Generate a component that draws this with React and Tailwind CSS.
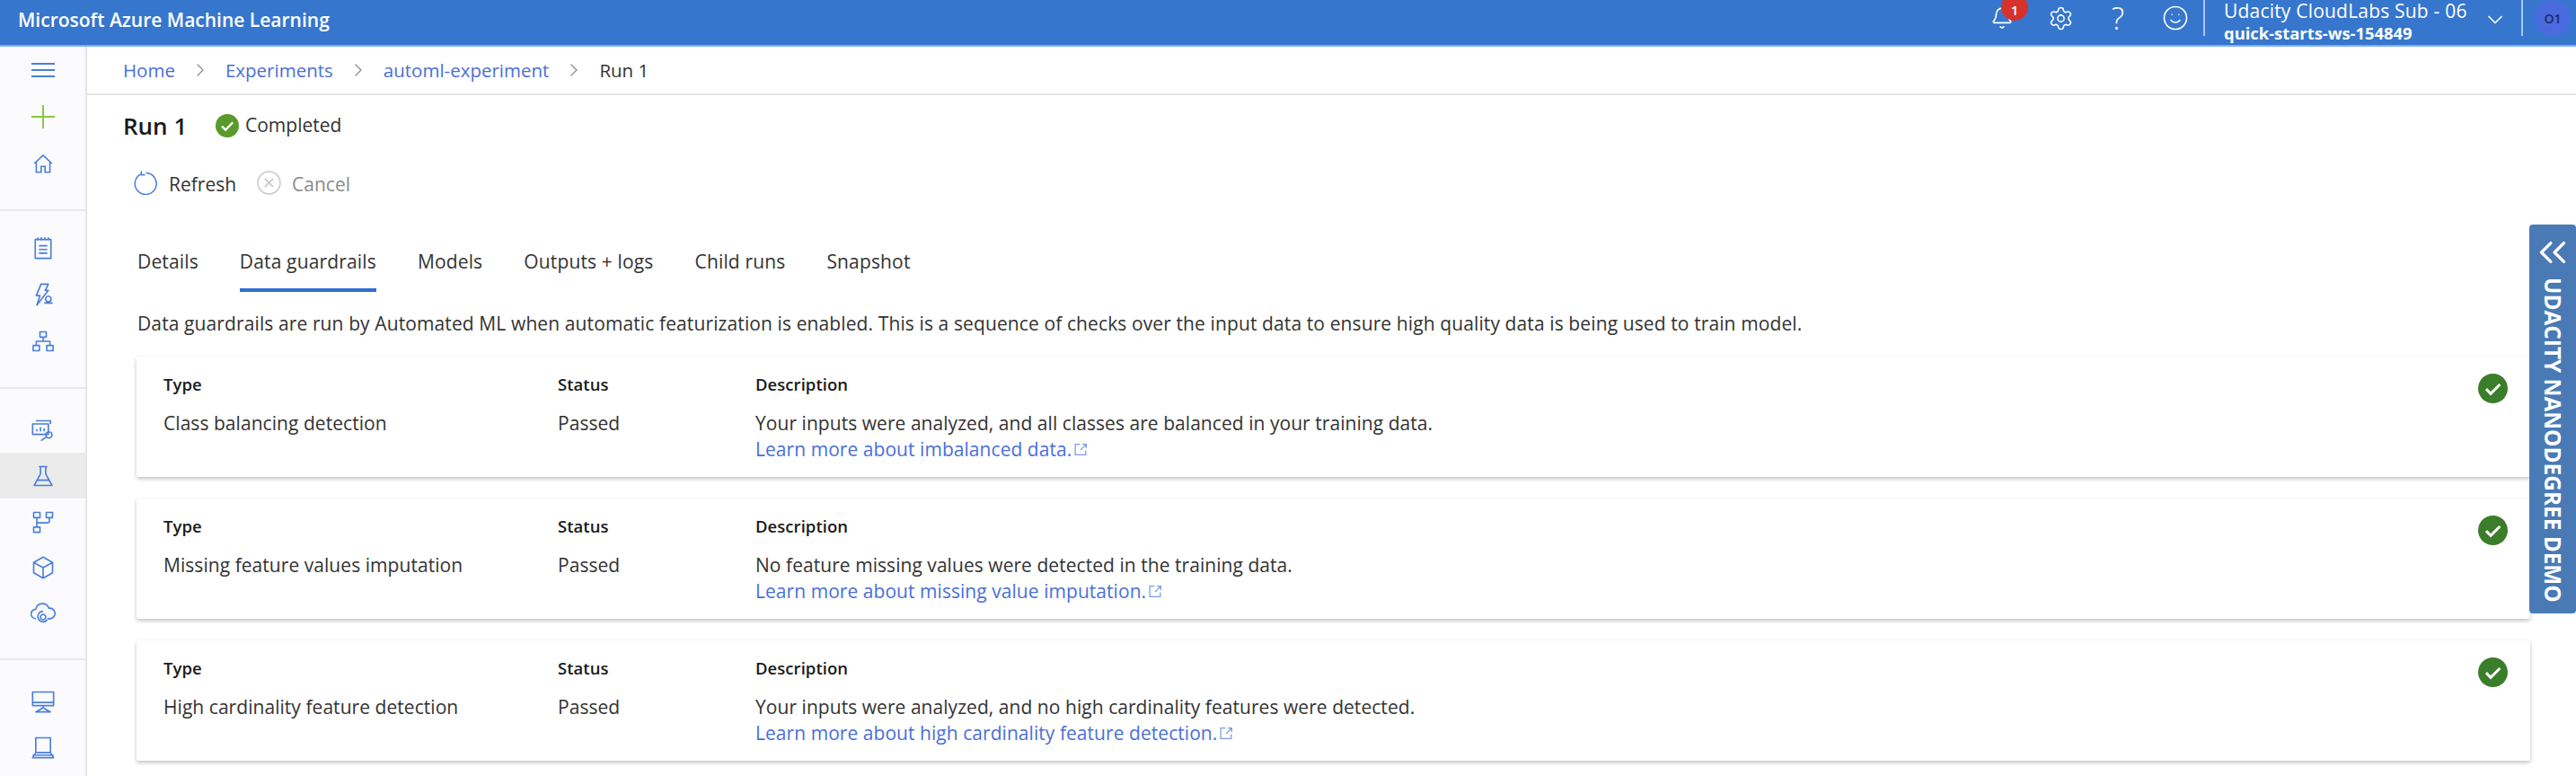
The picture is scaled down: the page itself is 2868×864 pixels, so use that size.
import { Bell, Settings, Smile, ChevronDown, ChevronRight, ChevronsLeft } from "lucide-react";

// Sidebar icons, drawn in the thin outline style of the portal
const SIDE_ICONS = {
  home: <path d="M3 12l9-8.5L21 12M5 10.5V21h5v-6h4v6h5V10.5" />,
  notes: <path d="M4.5 4h15v18h-15zM7 2v3M10.3 2v3M13.7 2v3M17 2v3M8 10h8M8 13.5h8M8 17h8" />,
  bolt: <path d="M10 2h7l-3 6h3l-11 14 3-9H5.5zM17 13.5a2.7 2.7 0 1 0 .01 0M13 20h8" />,
  tree: <path d="M9 3h6v5H9zM2.5 16h6v5h-6zM15.5 16h6v5h-6zM12 8v4M5.5 16v-4h13v4" />,
  search: <path d="M5 3h14v3M2 6h15v10H2zM6 13v-2M9.5 13V9M13 13v-3M17.5 13.5a3 3 0 1 0 .01 0M15 18.5L10 22" />,
  flask: <path d="M8 3h8M9.5 3v7L3.5 21h17L14.5 10V3M6.5 16h11" />,
  pipeline: <path d="M3 3h6v5H3zM15 3h6v5h-6zM3 17h6v5H3zM6 8v9M18 8v3a2 2 0 0 1-2 2H6" />,
  cube: <path d="M12 2l9 5v10l-9 5-9-5V7zM3 7l9 5 9-5M12 12v10" />,
  cloud: <path d="M5 17a4.5 4.5 0 0 1 0-9 6.5 6.5 0 0 1 12.5-1 5 5 0 0 1 1.5 10h-3M12 10a5 5 0 1 0 4 8M12 13a2.5 2.5 0 1 0 .01 0" />,
  monitor: <path d="M2 3h20v13H2zM12 16v2M5 22l7-4 7 4zM2 13h20" />,
  laptop: <path d="M5 3h14v14H5zM5 17l-3 5h20l-3-5M2 19.5h20" />,
};

function SideIcon({ name, size = 28, active, color = "#4a7fdc" }) {
  return (
    <div className={`h-[51px] flex items-center justify-center ${active ? "bg-[#ebebeb]" : ""}`}>
      <svg width={size} height={size} viewBox="0 0 24 24" fill="none" stroke={color} strokeWidth="1.4" strokeLinejoin="round">
        {SIDE_ICONS[name]}
      </svg>
    </div>
  );
}

function CheckCircle({ size, color }) {
  return (
    <svg width={size} height={size} viewBox="0 0 24 24" className="shrink-0">
      <circle cx="12" cy="12" r="12" fill={color} />
      <path d="M6.5 12.5l3.7 3.7 7.5-7.5" fill="none" stroke="#fff" strokeWidth="2.2" />
    </svg>
  );
}

function ExternalIcon() {
  return (
    <svg width="17" height="17" viewBox="0 0 16 16" fill="none" stroke="#7f9be6" strokeWidth="1.2" className="ml-[2px] inline-block">
      <path d="M7 2.5H2v11h11V9M9.5 2.5h4v4M13.5 2.5L7.5 8.5" />
    </svg>
  );
}

const crumbs = ["Home", "Experiments", "automl-experiment"];
const tabs = ["Details", "Data guardrails", "Models", "Outputs + logs", "Child runs", "Snapshot"];
const guardrails = [
  {
    type: "Class balancing detection",
    description: "Your inputs were analyzed, and all classes are balanced in your training data.",
    link: "Learn more about imbalanced data.",
  },
  {
    type: "Missing feature values imputation",
    description: "No feature missing values were detected in the training data.",
    link: "Learn more about missing value imputation.",
  },
  {
    type: "High cardinality feature detection",
    description: "Your inputs were analyzed, and no high cardinality features were detected.",
    link: "Learn more about high cardinality feature detection.",
  },
];

function GuardrailCard({ item }) {
  return (
    <div className="h-[134px] bg-white shadow-[0_2px_4px_rgba(0,0,0,0.25)] rounded-[2px] pl-[30px] pr-[25px] pt-[16px] flex text-[21px] tracking-[0.05px] text-[#333]">
      <div className="w-[439px]">
        <div className="h-[30px] leading-[30px] font-semibold text-[#1a1a1a] text-[18.5px]">Type</div>
        <div className="h-[30px] leading-[30px] mt-[13px]">{item.type}</div>
      </div>
      <div className="w-[220px]">
        <div className="h-[30px] leading-[30px] font-semibold text-[#1a1a1a] text-[18.5px]">Status</div>
        <div className="h-[30px] leading-[30px] mt-[13px]">Passed</div>
      </div>
      <div className="flex-1">
        <div className="h-[30px] leading-[30px] font-semibold text-[#1a1a1a] text-[18.5px]">Description</div>
        <div className="h-[30px] leading-[30px] mt-[13px]">{item.description}</div>
        <div className="h-[28px] leading-[28px] text-[#4a6fd8] flex items-center">
          {item.link}
          <ExternalIcon />
        </div>
      </div>
      <div className="pt-[3px]">
        <CheckCircle size={33} color="#3a7d2a" />
      </div>
    </div>
  );
}

export default function App() {
  return (
    <div className="relative w-full h-screen overflow-hidden bg-white flex flex-col font-['Open_Sans',sans-serif]">
      {/* top bar */}
      <header className="h-[52px] shrink-0 bg-[#3676cd] border-b-2 border-[#7fb0e8] flex items-start text-white">
        <div className="pl-[20px] h-[44px] leading-[44px] text-[21px] font-semibold">Microsoft Azure Machine Learning</div>
        <div className="ml-auto flex items-start h-[40px]">
          <div className="relative w-[66px] h-[40px] flex items-center justify-center">
            <Bell size={26} strokeWidth={1.5} />
            <span className="absolute left-[32px] top-[-7px] w-[30px] h-[30px] rounded-full bg-[#d6322c] flex items-center justify-center pt-[6px] text-[15px] leading-none font-semibold">1</span>
          </div>
          <div className="w-[64px] h-[40px] flex items-center justify-center">
            <Settings size={29} strokeWidth={1.3} />
          </div>
          <div className="w-[64px] h-[40px] flex items-center justify-center text-[34px] leading-none font-light">?</div>
          <div className="w-[64px] h-[40px] flex items-center justify-center">
            <Smile size={30} strokeWidth={1.3} />
          </div>
          <div className="w-[2px] h-[40px] bg-[#a9c6ec] ml-[-1px]" />
          <div className="ml-[21px] w-[288px] pt-[2px]">
            <div className="h-[20px] leading-[20px] text-[21px] tracking-[0.2px] whitespace-nowrap">Udacity CloudLabs Sub - 06</div>
            <div className="h-[28px] leading-[30px] text-[18.4px] font-bold whitespace-nowrap">quick-starts-ws-154849</div>
          </div>
          <div className="w-[28px] h-[44px] flex items-center justify-center">
            <ChevronDown size={30} strokeWidth={1.5} />
          </div>
          <div className="w-[2px] h-[40px] bg-[#a9c6ec] ml-[15px]" />
          <div className="ml-[13px] mr-[6px] w-[40px] h-[40px] rounded-full bg-[#4a6be0] text-[#1b2a5e] text-[14px] font-semibold flex items-center justify-center">O1</div>
        </div>
      </header>

      <div className="flex flex-1 min-h-0">
        {/* left nav */}
        <nav className="w-[97px] shrink-0 bg-[#fbfafd] border-r-2 border-[#e5e5e5]">
          <div className="pb-[25px] border-b-2 border-[#eaeaee]">
            <div className="h-[52px] flex items-center justify-center">
              <svg width="28" height="22" viewBox="0 0 28 22" stroke="#4a7fdc" strokeWidth="2"><path d="M1 4h26M1 11h26M1 18h26" /></svg>
            </div>
            <div className="h-[52px] flex items-center justify-center">
              <svg width="28" height="28" viewBox="0 0 28 28" stroke="#8cc63f" strokeWidth="2"><path d="M14 1v26M1 14h26" /></svg>
            </div>
            <div className="h-[52px] flex items-center justify-center">
              <svg width="26" height="26" viewBox="0 0 24 24" fill="none" stroke="#4a7fdc" strokeWidth="1.5">{SIDE_ICONS.home}</svg>
            </div>
          </div>
          <div className="pt-[15px] pb-[25px] border-b-2 border-[#eaeaee]">
            <div className="h-[52px] flex items-center justify-center"><SideIcon name="notes" /></div>
            <div className="h-[52px] flex items-center justify-center"><SideIcon name="bolt" /></div>
            <div className="h-[52px] flex items-center justify-center"><SideIcon name="tree" /></div>
          </div>
          <div className="pt-[20px] pb-[25px] border-b-2 border-[#eaeaee]">
            <SideIcon name="search" />
            <SideIcon name="flask" active />
            <SideIcon name="pipeline" />
            <SideIcon name="cube" />
            <SideIcon name="cloud" />
          </div>
          <div className="pt-[20px]">
            <SideIcon name="monitor" />
            <SideIcon name="laptop" />
          </div>
        </nav>

        <main className="flex-1 min-w-0">
          {/* breadcrumb */}
          <div className="h-[54px] border-b-2 border-[#e5e5e5] pl-[40px] flex items-center text-[20.5px]">
            {crumbs.map((c) => (
              <div key={c} className="flex items-center">
                <span className="text-[#4a6fd8]">{c}</span>
                <ChevronRight size={24} strokeWidth={1.2} className="mx-[16px] text-[#8a8a8a]" />
              </div>
            ))}
            <span className="text-[#333]">Run 1</span>
          </div>

          <div className="pl-[40px] h-[68px] flex items-center">
            <span className="text-[26px] font-semibold text-[#1a1a1a] w-[103px]">Run 1</span>
            <CheckCircle size={26} color="#5a9a2a" />
            <span className="ml-[7px] text-[21px] text-[#333]">Completed</span>
          </div>

          {/* toolbar */}
          <div className="pl-[52px] h-[58px] flex items-center text-[21px]">
            <svg width="27" height="27" viewBox="0 0 26 26" fill="none" stroke="#4a7fdc" strokeWidth="1.5">
              <path d="M8 3.5a11.5 11.5 0 1 0 5-1M8 0.5v4h4" />
            </svg>
            <span className="ml-[12px] pt-[5px] text-[#333]">Refresh</span>
            <svg width="27" height="27" viewBox="0 0 26 26" fill="none" stroke="#c8c8c8" strokeWidth="1.5" className="ml-[23px]">
              <circle cx="13" cy="13" r="12" />
              <path d="M8.5 8.5l9 9M17.5 8.5l-9 9" />
            </svg>
            <span className="ml-[12px] pt-[5px] text-[#8a8a8a]">Cancel</span>
          </div>

          <div className="ml-[55px] mr-[51px]">
            {/* tabs */}
            <div className="mt-[30px] flex h-[63px] text-[21px] tracking-[0.15px] text-[#333]">
              {tabs.map((t, i) => (
                <div key={t} className={`h-[63px] flex items-center mr-[46px] ${i === 1 ? "border-b-4 border-[#2f6fd0]" : "border-b-4 border-transparent"} ${i === 0 ? "ml-[1px]" : ""}`}>
                  {t}
                </div>
              ))}
            </div>
            <p className="mt-[20px] h-[30px] leading-[30px] pl-[1px] text-[21px] tracking-[0.11px] text-[#333] whitespace-nowrap">
              Data guardrails are run by Automated ML when automatic featurization is enabled. This is a sequence of checks over the input data to ensure high quality data is being used to train model.
            </p>
            <div className="mt-[22px] flex flex-col gap-[24px]">
              {guardrails.map((g) => (
                <GuardrailCard key={g.type} item={g} />
              ))}
            </div>
          </div>
        </main>
      </div>

      {/* demo tab pinned over the right edge */}
      <div className="absolute right-0 top-[250px] w-[52px] h-[433px] bg-[#4a7ab5] rounded-[4px] text-white flex flex-col items-center">
        <ChevronsLeft size={50} strokeWidth={1.6} className="mt-[6px] shrink-0" />
        <div className="mt-[3px] [writing-mode:vertical-rl] font-bold text-[24.4px] leading-[25px] whitespace-nowrap">UDACITY NANODEGREE DEMO</div>
      </div>
    </div>
  );
}
